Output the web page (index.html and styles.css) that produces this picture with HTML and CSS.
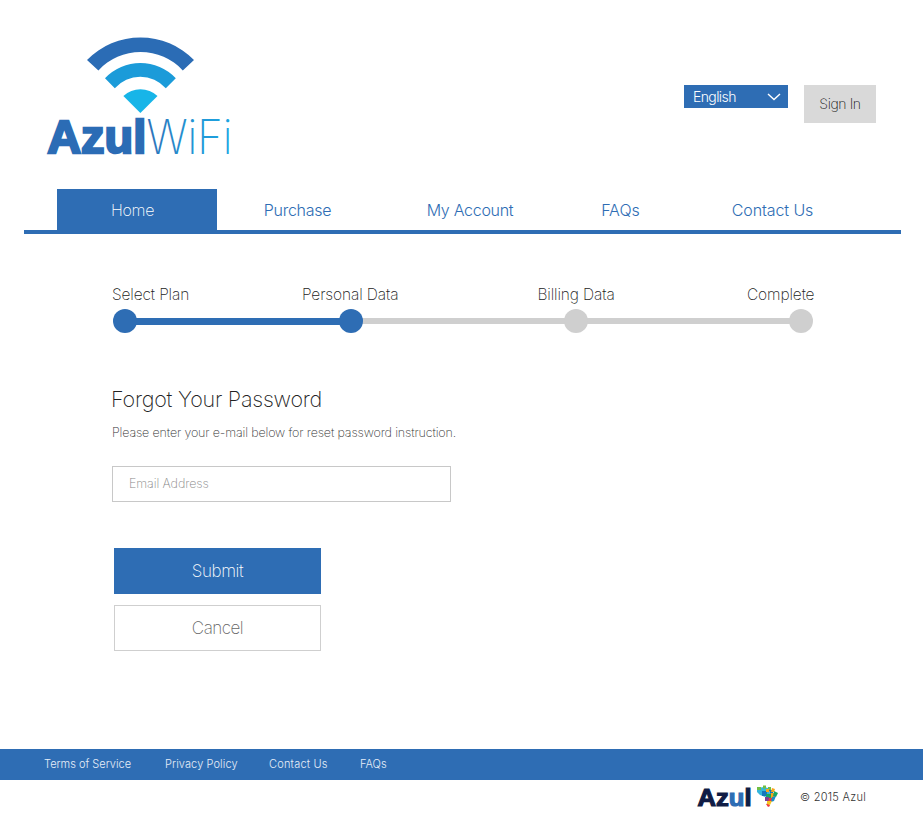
FILE: index.html
```html
<!DOCTYPE html>
<html lang="en">
<head>
<meta charset="utf-8">
<title>Azul WiFi</title>
<link rel="stylesheet" href="styles.css">
</head>
<body>
<header class="header">
  <svg class="logo" viewBox="40 30 210 150" role="img" aria-label="Azul WiFi">
    <defs>
      <linearGradient id="wifi" gradientUnits="userSpaceOnUse" x1="146" y1="0" x2="230" y2="0"><stop offset="0" stop-color="#2e70b8"/><stop offset=".45" stop-color="#2490d0"/><stop offset="1" stop-color="#1ca5e2"/></linearGradient>
    </defs>
    <path fill="#2b6cb5" d="M87 60A74.8 74.8 0 0 1 194 60L182.8 70.4A57.4 57.4 0 0 0 98.4 70.4Z"/>
    <path fill="#1b9bd9" d="M105 78.2A49 49 0 0 1 175.8 78.2L165.8 88.2A34 34 0 0 0 114.8 88.2Z"/>
    <path fill="#17b5e8" d="M123.4 96A25 25 0 0 1 157.5 96L140.4 113Z"/>
    <text class="logo-bold" x="47.200" y="153.200" textLength="99" lengthAdjust="spacingAndGlyphs">Azul</text>
    <text class="logo-thin" x="146.5" y="154.3" textLength="86" lengthAdjust="spacingAndGlyphs">WiFi</text>
  </svg>
  <div class="tools">
    <button class="language"><span>English</span><svg class="chevron" viewBox="0 0 14 8"><path d="M1 1L7 6.6L13 1"/></svg></button>
    <button class="signin"><span>Sign In</span></button>
  </div>
</header>
<nav class="nav">
  <a class="tab home"><span>Home</span></a>
  <a class="tab purchase"><span>Purchase</span></a>
  <a class="tab account"><span>My Account</span></a>
  <a class="tab faqs"><span>FAQs</span></a>
  <a class="tab contact"><span>Contact Us</span></a>
</nav>
<main class="main">
  <ol class="labels">
    <li>Select Plan</li><li>Personal Data</li><li>Billing Data</li><li>Complete</li>
  </ol>
  <div class="track">
    <i class="dot done"></i><i class="bar done"></i><i class="dot done"></i><i class="bar"></i><i class="dot"></i><i class="bar"></i><i class="dot"></i>
  </div>
  <h1 class="title">Forgot Your Password</h1>
  <p class="hint">Please enter your e-mail below for reset password instruction.</p>
  <div class="field"><span>Email Address</span></div>
  <button class="action submit"><span>Submit</span></button>
  <button class="action cancel"><span>Cancel</span></button>
</main>
<footer>
  <div class="links"><a class="terms">Terms of Service</a><a class="privacy">Privacy Policy</a><a class="support">Contact Us</a><a class="help">FAQs</a></div>
  <div class="legal">
    <svg class="brand" viewBox="694 781 86 33" role="img" aria-label="Azul">
      <text class="brand-text" x="697.600" y="805.9" textLength="54" lengthAdjust="spacingAndGlyphs">Az<tspan fill="#2e6db4" stroke="#2e6db4">u</tspan>l</text>
      <g>
        <path fill="#35b6dc" d="M757 788l7-1 4 1 2 6-5 3-5-2-3-3z"/>
        <path fill="#71bf44" d="M757 787h4v3h-4zM763 785.500h3v3h-3zM768 787h3v4h-3z"/>
        <path fill="#1578bd" d="M762 791h5v5h-5zM769 790l4 0 0 3-3 1z"/>
        <path fill="#f9a51b" d="M766 789h3v3h-3zM772 788l3 1-1 3h-3zM771 793h4v5h-4z"/>
        <path fill="#18a765" d="M766 794h5v4h-5zM774 791l4 2-2 4-3-1z"/>
        <path fill="#7b3f98" d="M765 797h4v4h-4z"/>
        <path fill="#ed3a3d" d="M769 798h5l-3 4h-3zM766 804l3-1 1 3-2 1z"/>
        <path fill="#1a8cca" d="M772 797l4-1-2 5-3 1z"/>
        <path fill="#f5c522" d="M767 801h5l-2 4-3-1z"/>
      </g>
    </svg>
    <span class="copy">© 2015 Azul</span>
  </div>
</footer>
</body>
</html>
```
FILE: styles.css
```css
* { box-sizing: border-box; }
body { margin: 0; width: 923px; height: 815px; background: #fff; color: #333; font-family: Inter, "Liberation Sans", sans-serif; font-weight: 250; overflow: hidden; }
button { font: inherit; border: 0; padding: 0; border-radius: 0; }
.header { display: flex; justify-content: space-between; height: 189px; padding: 30px 47px 0 40px; }
.logo { width: 210px; height: 150px; }
.logo-bold { font-family: "Liberation Sans", sans-serif; font-size: 46.5px; font-weight: 700; fill: #2b6cb5; stroke: #2b6cb5; stroke-width: 2.4px; }
.logo-thin { font-family: Inter, sans-serif; font-size: 48px; font-weight: 200; fill: url(#wifi); }
.tools { display: flex; gap: 16px; align-items: flex-start; padding-top: 55px; }
.language { display: flex; align-items: center; justify-content: space-between; width: 104px; height: 23px; padding: 0 7px 0 9px; background: #2e6db4; color: #fff; font-size: 14px; font-weight: 300; letter-spacing: -.6px; }
.chevron { width: 14px; height: 8px; fill: none; stroke: #fff; stroke-width: 1.4; }
.signin { width: 72px; height: 38px; padding-bottom: 2px; background: #d9d9d9; color: #111; font-size: 14px; letter-spacing: -.4px; }
.nav { display: flex; height: 45px; margin: 0 22px 0 24px; padding-left: 33px; border-bottom: 4px solid #2e6db4; }
.tab { display: flex; align-items: center; justify-content: center; height: 41px; padding-top: 1px; color: #2e6db4; font-size: 16px; font-weight: 300; letter-spacing: -.28px; }
.home { width: 160px; padding-right: 9px; background: #2e6db4; color: #fff; font-weight: 250; }
.purchase { width: 161px; }
.account { width: 184px; }
.faqs { width: 117px; padding: 0; letter-spacing: 0; }
.contact { width: 187px; letter-spacing: -.1px; }
.main { padding: 51px 110px 0 112px; }
.labels { display: grid; grid-template-columns: 190px 235.5px 209.5px auto; margin: 0; padding: 0; list-style: none; font-size: 15.5px; letter-spacing: -.12px; line-height: 20px; height: 24px; color: #222; }
.track { display: flex; align-items: center; height: 24px; margin-left: 1px; }
.dot { position: relative; z-index: 1; width: 24px; height: 24px; border-radius: 50%; background: #cfcfcf; }
.bar { width: 205px; height: 6px; margin: 0 -2px; background: #cfcfcf; }
.done { background: #2e6db4; }
.bar.done { width: 206px; height: 7px; }
.title { margin: 52px 0 0 -1px; font-size: 21.5px; letter-spacing: -.22px; line-height: 28px; font-weight: 250; color: #222; }
.hint { margin: 10px 0 0; font-size: 12.5px; letter-spacing: -.15px; line-height: 20px; }
.field { display: flex; align-items: center; width: 339px; height: 36px; margin-top: 23px; padding: 0 0 2px 16px; border: 1px solid #c8c8c8; color: #888; font-size: 12.5px; letter-spacing: -.08px; }
.action { display: block; width: 207px; height: 46px; margin-left: 2px; font-size: 17px; letter-spacing: -.4px; }
.submit { margin-top: 46px; background: #2e6db4; color: #fff; }
.cancel { margin-top: 11px; border: 1px solid #cfcfcf; background: #fff; color: #666; letter-spacing: -.5px; }
footer { margin-top: 98px; }
.links { display: flex; align-items: center; height: 31px; padding: 0 0 2px 44px; background: #2e6db4; color: #e6eef8; font-size: 11px; font-weight: 300; }
.terms { width: 121px; }
.privacy { width: 104px; letter-spacing: .1px; }
.support { width: 91px; letter-spacing: .2px; }
.legal { display: flex; height: 35px; padding: 1px 0 0 694px; align-items: flex-start; }
.brand { width: 86px; height: 33px; }
.brand-text { font-family: "Liberation Sans", sans-serif; font-size: 24px; font-weight: 700; fill: #101c45; stroke: #101c45; stroke-width: 1.2px; }
.copy { margin-left: 20px; font-size: 11px; letter-spacing: .27px; line-height: 33px; font-weight: 300; }
```
